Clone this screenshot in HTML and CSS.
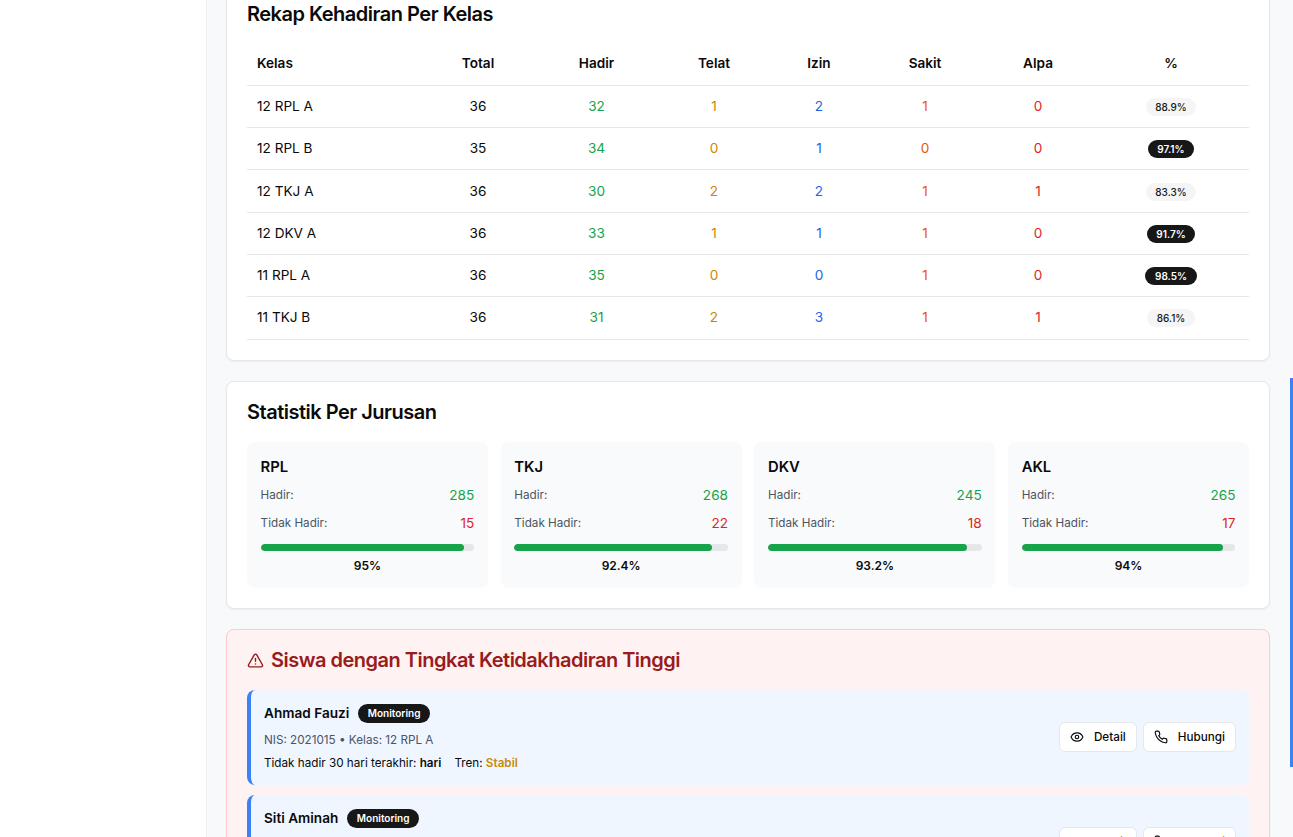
FILE: index.html
```html
<!DOCTYPE html>
<html lang="id">
<head>
<meta charset="utf-8">
<title>Rekap Kehadiran</title>
<link rel="stylesheet" href="styles.css">
</head>
<body>
<div class="app">
  <aside class="sidebar"></aside>
  <main class="main">
    <section class="card card-rekap">
      <h2 class="card-title">Rekap Kehadiran Per Kelas</h2>
      <table class="table">
        <colgroup>
          <col class="c0"><col class="c1"><col class="c2"><col class="c3"><col class="c4"><col class="c5"><col class="c6"><col class="c7">
        </colgroup>
        <thead>
          <tr><th class="left">Kelas</th><th>Total</th><th>Hadir</th><th>Telat</th><th>Izin</th><th>Sakit</th><th>Alpa</th><th>%</th></tr>
        </thead>
        <tbody>
          <tr><td class="left">12 RPL A</td><td>36</td><td class="green">32</td><td class="yellow">1</td><td class="blue">2</td><td class="orange">1</td><td class="red">0</td><td><span class="pill pill-light">88.9%</span></td></tr>
          <tr><td class="left">12 RPL B</td><td>35</td><td class="green">34</td><td class="yellow">0</td><td class="blue">1</td><td class="orange">0</td><td class="red">0</td><td><span class="pill pill-dark">97.1%</span></td></tr>
          <tr><td class="left">12 TKJ A</td><td>36</td><td class="green">30</td><td class="yellow">2</td><td class="blue">2</td><td class="orange">1</td><td class="red">1</td><td><span class="pill pill-light">83.3%</span></td></tr>
          <tr><td class="left">12 DKV A</td><td>36</td><td class="green">33</td><td class="yellow">1</td><td class="blue">1</td><td class="orange">1</td><td class="red">0</td><td><span class="pill pill-dark">91.7%</span></td></tr>
          <tr><td class="left">11 RPL A</td><td>36</td><td class="green">35</td><td class="yellow">0</td><td class="blue">0</td><td class="orange">1</td><td class="red">0</td><td><span class="pill pill-dark">98.5%</span></td></tr>
          <tr><td class="left">11 TKJ B</td><td>36</td><td class="green">31</td><td class="yellow">2</td><td class="blue">3</td><td class="orange">1</td><td class="red">1</td><td><span class="pill pill-light">86.1%</span></td></tr>
        </tbody>
      </table>
    </section>

    <section class="card">
      <h2 class="card-title">Statistik Per Jurusan</h2>
      <div class="tiles">
        <div class="tile">
          <h3 class="tile-title">RPL</h3>
          <div class="stat"><span class="stat-label">Hadir:</span><span class="stat-value green">285</span></div>
          <div class="stat"><span class="stat-label">Tidak Hadir:</span><span class="stat-value red">15</span></div>
          <div class="track"><div class="fill" style="width:95%"></div></div>
          <div class="tile-pct">95%</div>
        </div>
        <div class="tile">
          <h3 class="tile-title">TKJ</h3>
          <div class="stat"><span class="stat-label">Hadir:</span><span class="stat-value green">268</span></div>
          <div class="stat"><span class="stat-label">Tidak Hadir:</span><span class="stat-value red">22</span></div>
          <div class="track"><div class="fill" style="width:92.4%"></div></div>
          <div class="tile-pct">92.4%</div>
        </div>
        <div class="tile">
          <h3 class="tile-title">DKV</h3>
          <div class="stat"><span class="stat-label">Hadir:</span><span class="stat-value green">245</span></div>
          <div class="stat"><span class="stat-label">Tidak Hadir:</span><span class="stat-value red">18</span></div>
          <div class="track"><div class="fill" style="width:93.2%"></div></div>
          <div class="tile-pct">93.2%</div>
        </div>
        <div class="tile">
          <h3 class="tile-title">AKL</h3>
          <div class="stat"><span class="stat-label">Hadir:</span><span class="stat-value green">265</span></div>
          <div class="stat"><span class="stat-label">Tidak Hadir:</span><span class="stat-value red">17</span></div>
          <div class="track"><div class="fill" style="width:94%"></div></div>
          <div class="tile-pct">94%</div>
        </div>
      </div>
    </section>

    <section class="card card-alert">
      <h2 class="card-title alert-title">
        <svg class="alert-icon" viewBox="0 0 24 24" fill="none" stroke="currentColor" stroke-width="2" stroke-linecap="round" stroke-linejoin="round"><path d="m21.73 18-8-14a2 2 0 0 0-3.48 0l-8 14A2 2 0 0 0 4 21h16a2 2 0 0 0 1.73-3"/><path d="M12 9v4"/><path d="M12 17h.01"/></svg>
        Siswa dengan Tingkat Ketidakhadiran Tinggi
      </h2>
      <div class="students">
        <article class="student">
          <div class="student-info">
            <div class="student-head"><span class="student-name">Ahmad Fauzi</span><span class="pill pill-dark pill-status">Monitoring</span></div>
            <div class="student-meta">NIS: 2021015 • Kelas: 12 RPL A</div>
            <div class="student-line"><span>Tidak hadir 30 hari terakhir: <b>hari</b></span><span>Tren: <b class="trend">Stabil</b></span></div>
          </div>
          <div class="actions">
            <button class="btn"><svg class="btn-icon" viewBox="0 0 24 24" fill="none" stroke="currentColor" stroke-width="2" stroke-linecap="round" stroke-linejoin="round"><path d="M2.06 12.35a1 1 0 0 1 0-.7 10.75 10.75 0 0 1 19.88 0 1 1 0 0 1 0 .7 10.75 10.75 0 0 1-19.88 0"/><circle cx="12" cy="12" r="3"/></svg>Detail</button>
            <button class="btn"><svg class="btn-icon" viewBox="0 0 24 24" fill="none" stroke="currentColor" stroke-width="2" stroke-linecap="round" stroke-linejoin="round"><path d="M22 16.92v3a2 2 0 0 1-2.18 2 19.79 19.79 0 0 1-8.63-3.07 19.5 19.5 0 0 1-6-6 19.79 19.79 0 0 1-3.07-8.67A2 2 0 0 1 4.11 2h3a2 2 0 0 1 2 1.72 12.84 12.84 0 0 0 .7 2.81 2 2 0 0 1-.45 2.11L8.09 9.91a16 16 0 0 0 6 6l1.27-1.27a2 2 0 0 1 2.11-.45 12.84 12.84 0 0 0 2.81.7A2 2 0 0 1 22 16.92z"/></svg>Hubungi</button>
          </div>
        </article>
        <article class="student">
          <div class="student-info">
            <div class="student-head"><span class="student-name">Siti Aminah</span><span class="pill pill-dark pill-status">Monitoring</span></div>
            <div class="student-meta">NIS: 2021022 • Kelas: 12 TKJ A</div>
            <div class="student-line"><span>Tidak hadir 30 hari terakhir: <b>hari</b></span><span>Tren: <b class="trend">Stabil</b></span></div>
          </div>
          <div class="actions">
            <button class="btn"><svg class="btn-icon" viewBox="0 0 24 24" fill="none" stroke="currentColor" stroke-width="2" stroke-linecap="round" stroke-linejoin="round"><path d="M2.06 12.35a1 1 0 0 1 0-.7 10.75 10.75 0 0 1 19.88 0 1 1 0 0 1 0 .7 10.75 10.75 0 0 1-19.88 0"/><circle cx="12" cy="12" r="3"/></svg>Detail</button>
            <button class="btn"><svg class="btn-icon" viewBox="0 0 24 24" fill="none" stroke="currentColor" stroke-width="2" stroke-linecap="round" stroke-linejoin="round"><path d="M22 16.92v3a2 2 0 0 1-2.18 2 19.79 19.79 0 0 1-8.63-3.07 19.5 19.5 0 0 1-6-6 19.79 19.79 0 0 1-3.07-8.67A2 2 0 0 1 4.11 2h3a2 2 0 0 1 2 1.72 12.84 12.84 0 0 0 .7 2.81 2 2 0 0 1-.45 2.11L8.09 9.91a16 16 0 0 0 6 6l1.27-1.27a2 2 0 0 1 2.11-.45 12.84 12.84 0 0 0 2.81.7A2 2 0 0 1 22 16.92z"/></svg>Hubungi</button>
          </div>
        </article>
      </div>
    </section>
  </main>
</div>
<div class="scroll-thumb"></div>
</body>
</html>
```

FILE: styles.css
```css
* { box-sizing: border-box; }
html, body { margin: 0; height: 837px; overflow: hidden; }
body { font-family: "Inter", "Liberation Sans", sans-serif; color: #0a0a0a; background: #f8f9fb; }

.app { display: flex; height: 837px; overflow: hidden; }
.sidebar { flex: 0 0 207px; background: #fff; border-right: 1px solid #eff0f2; }
.main { flex: 1 1 auto; padding: 0 23px 0 19px; display: flex; flex-direction: column; gap: 20px; min-width: 0; }

.card { flex: none; background: #fff; border: 1px solid #e5e7eb; border-radius: 8px; padding: 20px; box-shadow: 0 1px 2px rgba(0,0,0,.05); }
.card-rekap { margin-top: -17px; padding-bottom: 20.65px; }
.card-title { margin: 0; font-size: 20px; line-height: 20px; font-weight: 600; letter-spacing: -.5px; }

.table { width: 1002px; border-collapse: collapse; table-layout: fixed; margin-top: 19px; font-size: 13.6px; }
.c0 { width: 173px; } .c1 { width: 116px; } .c2 { width: 121px; } .c3 { width: 114px; }
.c4 { width: 96px; } .c5 { width: 116px; } .c6 { width: 110px; } .c7 { width: 156px; }
.table th, .table td { text-align: center; padding: 0 10px 1px; height: 42.3px; border-bottom: 1px solid #e5e7eb; }
.table th { font-weight: 600; }
.table .left { text-align: left; }

.green { color: #16a34a; }
.yellow { color: #ca8a04; }
.blue { color: #2563eb; }
.orange { color: #ea580c; }
.red { color: #dc2626; }

.pill { display: inline-block; border-radius: 999px; font-size: 10px; line-height: 14px; font-weight: 600; padding: 2px 9.5px; vertical-align: -2px; }
.pill-light { background: #f5f5f5; color: #171717; font-weight: 500; }
.pill-dark { background: #171717; color: #fff; }

.tiles { display: grid; grid-template-columns: repeat(4, 1fr); gap: 12.8px; margin-top: 20px; }
.tile { background: #f9fafb; border-radius: 8px; padding: 15px 13.6px 0; height: 146px; }
.tile-title { margin: 0 0 8px; font-size: 14.8px; line-height: 20px; font-weight: 600; }
.stat { display: flex; justify-content: space-between; align-items: center; height: 20px; margin-bottom: 8px; }
.stat-label { font-size: 11.7px; color: #4b5563; }
.stat-value { font-size: 13.6px; font-weight: 400; }
.track { height: 7px; border-radius: 999px; background: #e5e7eb; overflow: hidden; margin-top: 11px; }
.fill { height: 100%; border-radius: 999px; background: #16a34a; }
.tile-pct { text-align: center; font-size: 12px; font-weight: 600; line-height: 16px; margin-top: 7px; }

.card-alert { background: #fef2f2; border-color: #fecaca; }
.alert-title { display: flex; align-items: center; gap: 7px; color: #991b1b; }
.alert-icon { width: 17px; height: 17px; flex: none; }
.students { display: flex; flex-direction: column; gap: 10.4px; margin-top: 20px; }
.student { display: flex; justify-content: space-between; align-items: center; height: 94.6px; background: #eff6ff; border-left: 4px solid #3b82f6; border-radius: 8px; padding: 0 13px 1px; }
.student-head { display: flex; align-items: center; gap: 9px; }
.student-name { font-size: 13.6px; font-weight: 600; }
.pill-status { line-height: 15px; vertical-align: baseline; }
.student-meta { font-size: 11.7px; color: #4b5563; margin-top: 9px; line-height: 16px; }
.student-line { display: flex; gap: 13px; font-size: 11.7px; line-height: 16px; margin-top: 7px; }
.student-line b { font-weight: 600; }
.student-line .trend { color: #ca8a04; }
.actions { display: flex; gap: 6px; }
.btn { display: flex; align-items: center; gap: 10px; height: 30px; padding: 0 10px; font: 500 11.7px "Inter", "Liberation Sans", sans-serif; color: #0a0a0a; background: #fff; border: 1px solid #e5e7eb; border-radius: 6px; }
.btn-icon { width: 14px; height: 14px; flex: none; }

.scroll-thumb { position: fixed; right: 0; top: 378px; width: 3px; height: 389px; background: #3b82f6; }
```
